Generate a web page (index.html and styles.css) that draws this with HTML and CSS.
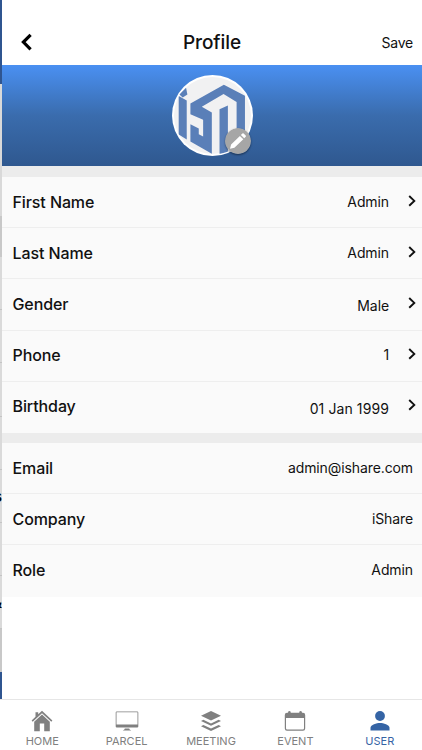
FILE: index.html
```html
<!DOCTYPE html>
<html lang="en">
<head>
<meta charset="utf-8">
<title>Profile</title>
<link rel="stylesheet" href="styles.css">
</head>
<body>
<div class="app">
  <div class="stage">
    <div class="under" aria-hidden="true">
      <div class="u-head"></div>
      <div class="u-banner"></div>
      <div class="u-gap"></div>
      <div class="u-row"></div>
      <div class="u-row"></div>
      <div class="u-row"></div>
      <div class="u-row"></div>
      <div class="u-row"><span>s</span></div>
      <div class="u-row"></div>
      <div class="u-row"><span>&amp;</span></div>
      <div class="u-rest"></div>
      <div class="u-foot"></div>
    </div>
    <main class="page">
      <header class="bar">
        <svg class="back" viewBox="0 0 12 20"><path d="M10.6 1.9 3.4 9.1 10.6 16.3" /></svg>
        <h1>Profile</h1>
        <span class="save">Save</span>
      </header>
      <section class="banner">
        <div class="avatar">
          <svg class="logo" viewBox="38 40 242 242">
            <defs><clipPath id="disc"><circle cx="159" cy="161" r="117"/></clipPath></defs>
            <circle cx="159" cy="161" r="121" fill="#fff"/>
            <circle cx="159" cy="161" r="115" fill="#f1f1f2"/>
            <g fill="#5a7fb8" clip-path="url(#disc)">
              <path d="M60 98 80 78 84 98 70 107Z"/>
              <path d="M58 103 82 116V233L58 218Z"/>
              <path d="M93 125 193 69 256 102V250H231V121L192 97 127 135 157 152V275L93 239V187L118 200V217L131 224V174L93 157Z"/>
              <path d="M180 142 205 131V275H180Z"/>
            </g>
          </svg>
          <svg class="edit" viewBox="0 0 26 26"><circle cx="13" cy="13" r="13"/><path d="M5 20.8 6.1 16.4 14.9 7.9 18.3 11.3 9.4 19.7ZM15.9 6.9 17.4 5.4Q18 4.9 18.6 5.4L20.7 7.5Q21.3 8.2 20.7 8.8L19.2 10.3Z"/></svg>
        </div>
      </section>
      <section class="list editable">
        <div class="row"><span class="label">First Name</span><span class="value">Admin</span><svg class="chev" viewBox="0 0 8 12"><path d="M1.2 1 6.3 5.9 1.2 10.8"/></svg></div>
        <div class="row"><span class="label">Last Name</span><span class="value">Admin</span><svg class="chev" viewBox="0 0 8 12"><path d="M1.2 1 6.3 5.9 1.2 10.8"/></svg></div>
        <div class="row"><span class="label">Gender</span><span class="value low">Male</span><svg class="chev" viewBox="0 0 8 12"><path d="M1.2 1 6.3 5.9 1.2 10.8"/></svg></div>
        <div class="row"><span class="label">Phone</span><span class="value">1</span><svg class="chev" viewBox="0 0 8 12"><path d="M1.2 1 6.3 5.9 1.2 10.8"/></svg></div>
        <div class="row"><span class="label">Birthday</span><span class="value low date">01 Jan 1999</span><svg class="chev" viewBox="0 0 8 12"><path d="M1.2 1 6.3 5.9 1.2 10.8"/></svg></div>
      </section>
      <section class="list">
        <div class="row"><span class="label">Email</span><span class="value">admin@ishare.com</span></div>
        <div class="row"><span class="label">Company</span><span class="value">iShare</span></div>
        <div class="row"><span class="label">Role</span><span class="value">Admin</span></div>
      </section>
    </main>
  </div>
  <nav class="tabs">
    <div class="tab"><svg viewBox="0 0 24 24"><path d="M12 1.8 1.6 11.5 2.7 12.7 12 4.2 21.3 12.7 22.4 11.5 18.5 7.8V3.2H15.8V5.3ZM12 5.6 4.2 12.7V22.3H9.8V14.6H14.2V22.3H19.8V12.7Z" transform="matrix(-1 0 0 1 24 0)"/></svg><span>HOME</span></div>
    <div class="tab"><svg viewBox="0 0 24 24"><path fill-rule="evenodd" d="M1.8 2.5H22.2Q23.3 2.5 23.3 3.6V17.4Q23.3 18.5 22.2 18.5H1.8Q.7 18.5 .7 17.4V3.6Q.7 2.5 1.8 2.5ZM1.5 3.3V15.4H22.5V3.3ZM9.8 19.5H14.2L14.6 20.6 16.3 21.6H7.7L9.4 20.6Z"/></svg><span>PARCEL</span></div>
    <div class="tab"><svg viewBox="0 0 24 24"><path d="M12 2 22 6.8 12 11.6 2 6.8ZM4.4 10.8 12 14.4 19.6 10.8 22 12 12 16.8 2 12ZM4.4 16 12 19.6 19.6 16 22 17.2 12 22 2 17.2Z"/></svg><span>MEETING</span></div>
    <div class="tab"><svg viewBox="0 0 24 24"><path fill-rule="evenodd" d="M4 3.8H5.1V2.8Q6.4 1.2 7.7 2.8V3.8H16.3V2.8Q17.6 1.2 18.9 2.8V3.8H20Q22.2 3.8 22.2 6V19.5Q22.2 21.7 20 21.7H4Q1.8 21.7 1.8 19.5V6Q1.8 3.8 4 3.8ZM3 9V19.3Q3 20.5 4.2 20.5H19.8Q21 20.5 21 19.3V9Z"/></svg><span>EVENT</span></div>
    <div class="tab active"><svg viewBox="0 0 24 24"><circle cx="12" cy="7" r="4.9"/><path d="M2.5 21.6V18.8C2.5 15.7 8.7 14 12 14S21.5 15.7 21.5 18.8V21.6Z"/></svg><span>USER</span></div>
  </nav>
</div>
</body>
</html>
```
FILE: styles.css
```css
* { box-sizing: border-box; }
body { margin: 0; background: #fff; font-family: Inter, "Liberation Sans", sans-serif; color: #111; }
.app { width: 422px; height: 750px; display: flex; flex-direction: column; overflow: hidden; }
.stage { height: 699px; display: flex; }

.under { width: 2px; flex: none; overflow: hidden; display: flex; flex-direction: column; background: #d8d8d8; }
.under > div { flex: none; }
.u-head { height: 84px; background: #2f5590; }
.u-banner { height: 132px; background: #d9d9d9; }
.u-gap { height: 41px; background: #c8c8c8; }
.u-row { height: 53.2px; border-bottom: 1px solid #c4c4c4; display: flex; align-items: center; justify-content: flex-end; font-size: 16px; font-weight: 600; color: #000; background: #dadada; }
.under > .u-rest { flex: 1 1 auto; background: #c8c8c8; }
.u-foot { height: 27px; background: #2f5590; }

.page { flex: 1; min-width: 0; background: #fff; }
.bar { height: 65px; padding: 20px 9px 0 18px; display: grid; grid-template-columns: 60px 1fr 60px; align-items: center; }
.back { width: 12px; height: 20px; }
.back path { fill: none; stroke: #000; stroke-width: 3.2; }
.bar h1 { margin: 0 9px 0 0; text-align: center; font-size: 19px; line-height: 24px; font-weight: 500; letter-spacing: -.1px; }
.save { text-align: right; font-size: 14px; letter-spacing: -.2px; }

.banner { height: 101px; padding: 10px 0 0 1px; background: linear-gradient(#4a90f2, #3a6cad 50%, #2f588f); display: flex; justify-content: center; }
.avatar { position: relative; width: 81px; height: 81px; }
.logo { display: block; width: 81px; height: 81px; }
.edit { position: absolute; left: 53px; top: 53px; width: 26px; height: 26px; border-radius: 50%; box-shadow: 0 1px 2px rgba(0, 0, 0, .45); }
.edit circle { fill: #a6a6a6; }
.edit path { fill: #fff; }

.list { border-top: 10px solid #ececec; }
.banner + .list { border-top-width: 11px; }
.row { height: 51.2px; padding: 0 9px 0 10.5px; display: flex; align-items: center; background: #fafafa; border-bottom: 1px solid #eee; }
.row:last-child { border-bottom-color: #fafafa; }
.label { flex: 1; font-size: 16px; font-weight: 500; letter-spacing: -.1px; padding-bottom: 1px; }
.value { font-size: 14px; padding-bottom: 2px; letter-spacing: -.1px; }
.low { padding: 3px 0 0; }
.date { letter-spacing: .1px; }
.editable .value { margin-right: 19px; }
.chev { width: 8px; height: 12px; margin: 0 -3px 3px 0; }
.chev path { fill: none; stroke: #111; stroke-width: 1.9; }

.tabs { height: 51px; border-top: 1px solid #e6e6e6; display: grid; grid-template-columns: repeat(5, 1fr); background: #fff; }
.tab { display: flex; flex-direction: column; align-items: center; padding-top: 9px; color: #808080; font-size: 11px; line-height: 14px; }
.tab svg { width: 24px; height: 24px; fill: currentColor; }
.tab span { margin-top: 1px; }
.active { color: #3564a5; }
```
